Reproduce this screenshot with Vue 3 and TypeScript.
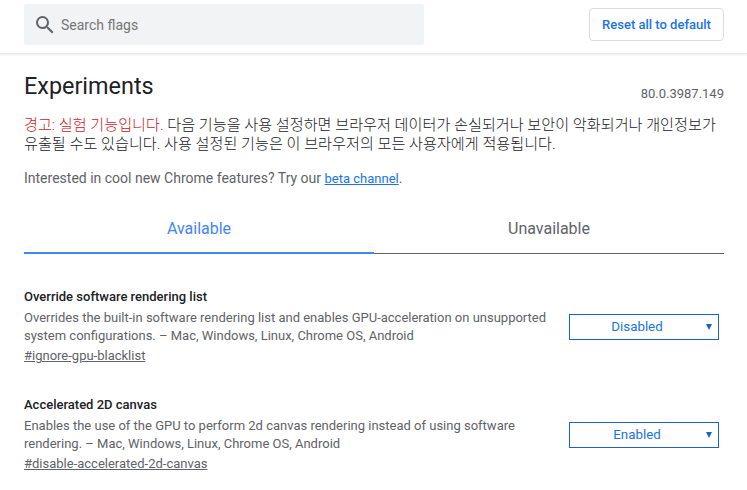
<script setup lang="ts">
interface Flag {
  title: string;
  desc: string;
  anchor: string;
  value: string;
}
const flags: Flag[] = [
  {
    title: "Override software rendering list",
    desc: "Overrides the built-in software rendering list and enables GPU-acceleration on unsupported system configurations. – Mac, Windows, Linux, Chrome OS, Android",
    anchor: "#ignore-gpu-blacklist",
    value: "Disabled",
  },
  {
    title: "Accelerated 2D canvas",
    desc: "Enables the use of the GPU to perform 2d canvas rendering instead of using software rendering. – Mac, Windows, Linux, Chrome OS, Android",
    anchor: "#disable-accelerated-2d-canvas",
    value: "Enabled",
  },
];
</script>

<template>
  <div class="page">
    <header class="top">
      <div class="search">
        <svg class="icon" width="24" height="24" viewBox="0 0 24 24" fill="#5f6368">
          <path d="M15.5 14h-.79l-.28-.27A6.47 6.47 0 0 0 16 9.5 6.5 6.5 0 1 0 9.5 16c1.61 0 3.09-.59 4.23-1.57l.27.28v.79l5 4.99L20.49 19l-4.99-5zm-6 0C7.01 14 5 11.99 5 9.5S7.01 5 9.5 5 14 7.01 14 9.5 11.99 14 9.5 14z" />
        </svg>
        <span class="placeholder">Search flags</span>
      </div>
      <button class="reset">Reset all to default</button>
    </header>
    <main class="content">
      <div class="heading">
        <h1>Experiments</h1>
        <span class="version">80.0.3987.149</span>
      </div>
      <p class="warning"><span class="red">경고: 실험 기능입니다.</span> 다음 기능을 사용 설정하면 브라우저 데이터가 손실되거나 보안이 악화되거나 개인정보가 유출될 수도 있습니다. 사용 설정된 기능은 이 브라우저의 모든 사용자에게 적용됩니다.</p>
      <p class="promo">Interested in cool new Chrome features? Try our <a class="beta">beta channel</a>.</p>
      <nav class="tabs">
        <div class="tab active">Available</div>
        <div class="tab">Unavailable</div>
      </nav>
      <section class="flags">
        <article v-for="f in flags" :key="f.anchor" class="flag">
          <div class="info">
            <h2>{{ f.title }}</h2>
            <p class="desc">{{ f.desc }}</p>
            <a class="anchor">{{ f.anchor }}</a>
          </div>
          <div class="select">
            <span>{{ f.value }}</span>
            <i class="arrow"></i>
          </div>
        </article>
      </section>
    </main>
  </div>
</template>

<style>
html, body { margin: 0; background: #fff; overflow: hidden; }
</style>

<style scoped>
.page {
  width: 747px;
  height: 490px;
  overflow: hidden;
  font-family: Roboto, "Noto Sans CJK KR", sans-serif;
  font-size: 13px;
  color: #5a5a5a;
}
.top {
  height: 54px;
  box-sizing: border-box;
  padding: 4px 23px 0 24px;
  display: flex;
  justify-content: space-between;
  align-items: flex-start;
  border-bottom: 1px solid #e8e8e8;
  box-shadow: 0 1px 2px rgba(0, 0, 0, 0.08);
}
.search {
  width: 400px;
  height: 41px;
  background: #f1f3f4;
  border-radius: 2px;
  display: flex;
  align-items: center;
  padding-left: 9px;
  box-sizing: border-box;
}
.icon { flex: none; }
.placeholder { margin-left: 4px; font-size: 14px; color: #757575; }
.reset {
  margin-top: 4px;
  width: 135px;
  height: 33px;
  padding: 0;
  background: #fff;
  border: 1px solid #dadce0;
  border-radius: 4px;
  color: #1a73e8;
  font: 500 13px Roboto, sans-serif;
}
.content { padding: 0 23px 0 24px; }
.heading {
  display: flex;
  justify-content: space-between;
  align-items: flex-start;
  height: 50px;
}
h1 { margin: 17px 0 0; font-size: 23.4px; font-weight: 400; line-height: 30px; color: #202124; }
.version { font-size: 13px; line-height: 17px; color: #5f6368; margin-top: 31px; }
.warning { margin: 12px 0 0; font-size: 15.15px; line-height: 19px; color: #202124; font-weight: 300; }
.red { color: #c5221f; }
.promo { margin: 14px 0 0; font-size: 14px; line-height: 20px; color: #5f6368; }
.beta { font-size: 13px; color: #1a73e8; text-decoration: underline; }
.tabs { display: flex; margin-top: 3px; border-bottom: 1px solid #5f6368; height: 61px; }
.tab {
  flex: 1;
  text-align: center;
  font-size: 16px;
  line-height: 20px;
  padding-top: 27px;
  color: #5f6368;
  box-sizing: border-box;
}
.tab.active { color: #4285f4; border-bottom: 2px solid #4285f4; margin-bottom: -1px; }
.flags { padding-top: 33px; }
.flag {
  display: flex;
  justify-content: space-between;
  align-items: flex-start;
  height: 108px;
}
.info { width: 530px; }
h2 { margin: 0 0 2px; font-size: 13px; font-weight: 500; line-height: 20px; color: #202124; }
.desc { margin: 0; font-size: 13px; line-height: 18px; color: #5f6368; }
.anchor { display: block; margin-top: 1px; line-height: 20px; color: #5f6368; text-decoration: underline; }
.select {
  position: relative;
  width: 150px;
  height: 26px;
  margin: 27px 5px 0 0;
  padding-right: 14px;
  box-sizing: border-box;
  border: 1px solid #1a62c9;
  color: #1a73e8;
  text-align: center;
  line-height: 24px;
  font-size: 13.333px;
}
.arrow {
  position: absolute;
  right: 6px;
  top: 9px;
  width: 0;
  height: 0;
  border-left: 3.5px solid transparent;
  border-right: 3.5px solid transparent;
  border-top: 6px solid #1a62c9;
}
</style>
